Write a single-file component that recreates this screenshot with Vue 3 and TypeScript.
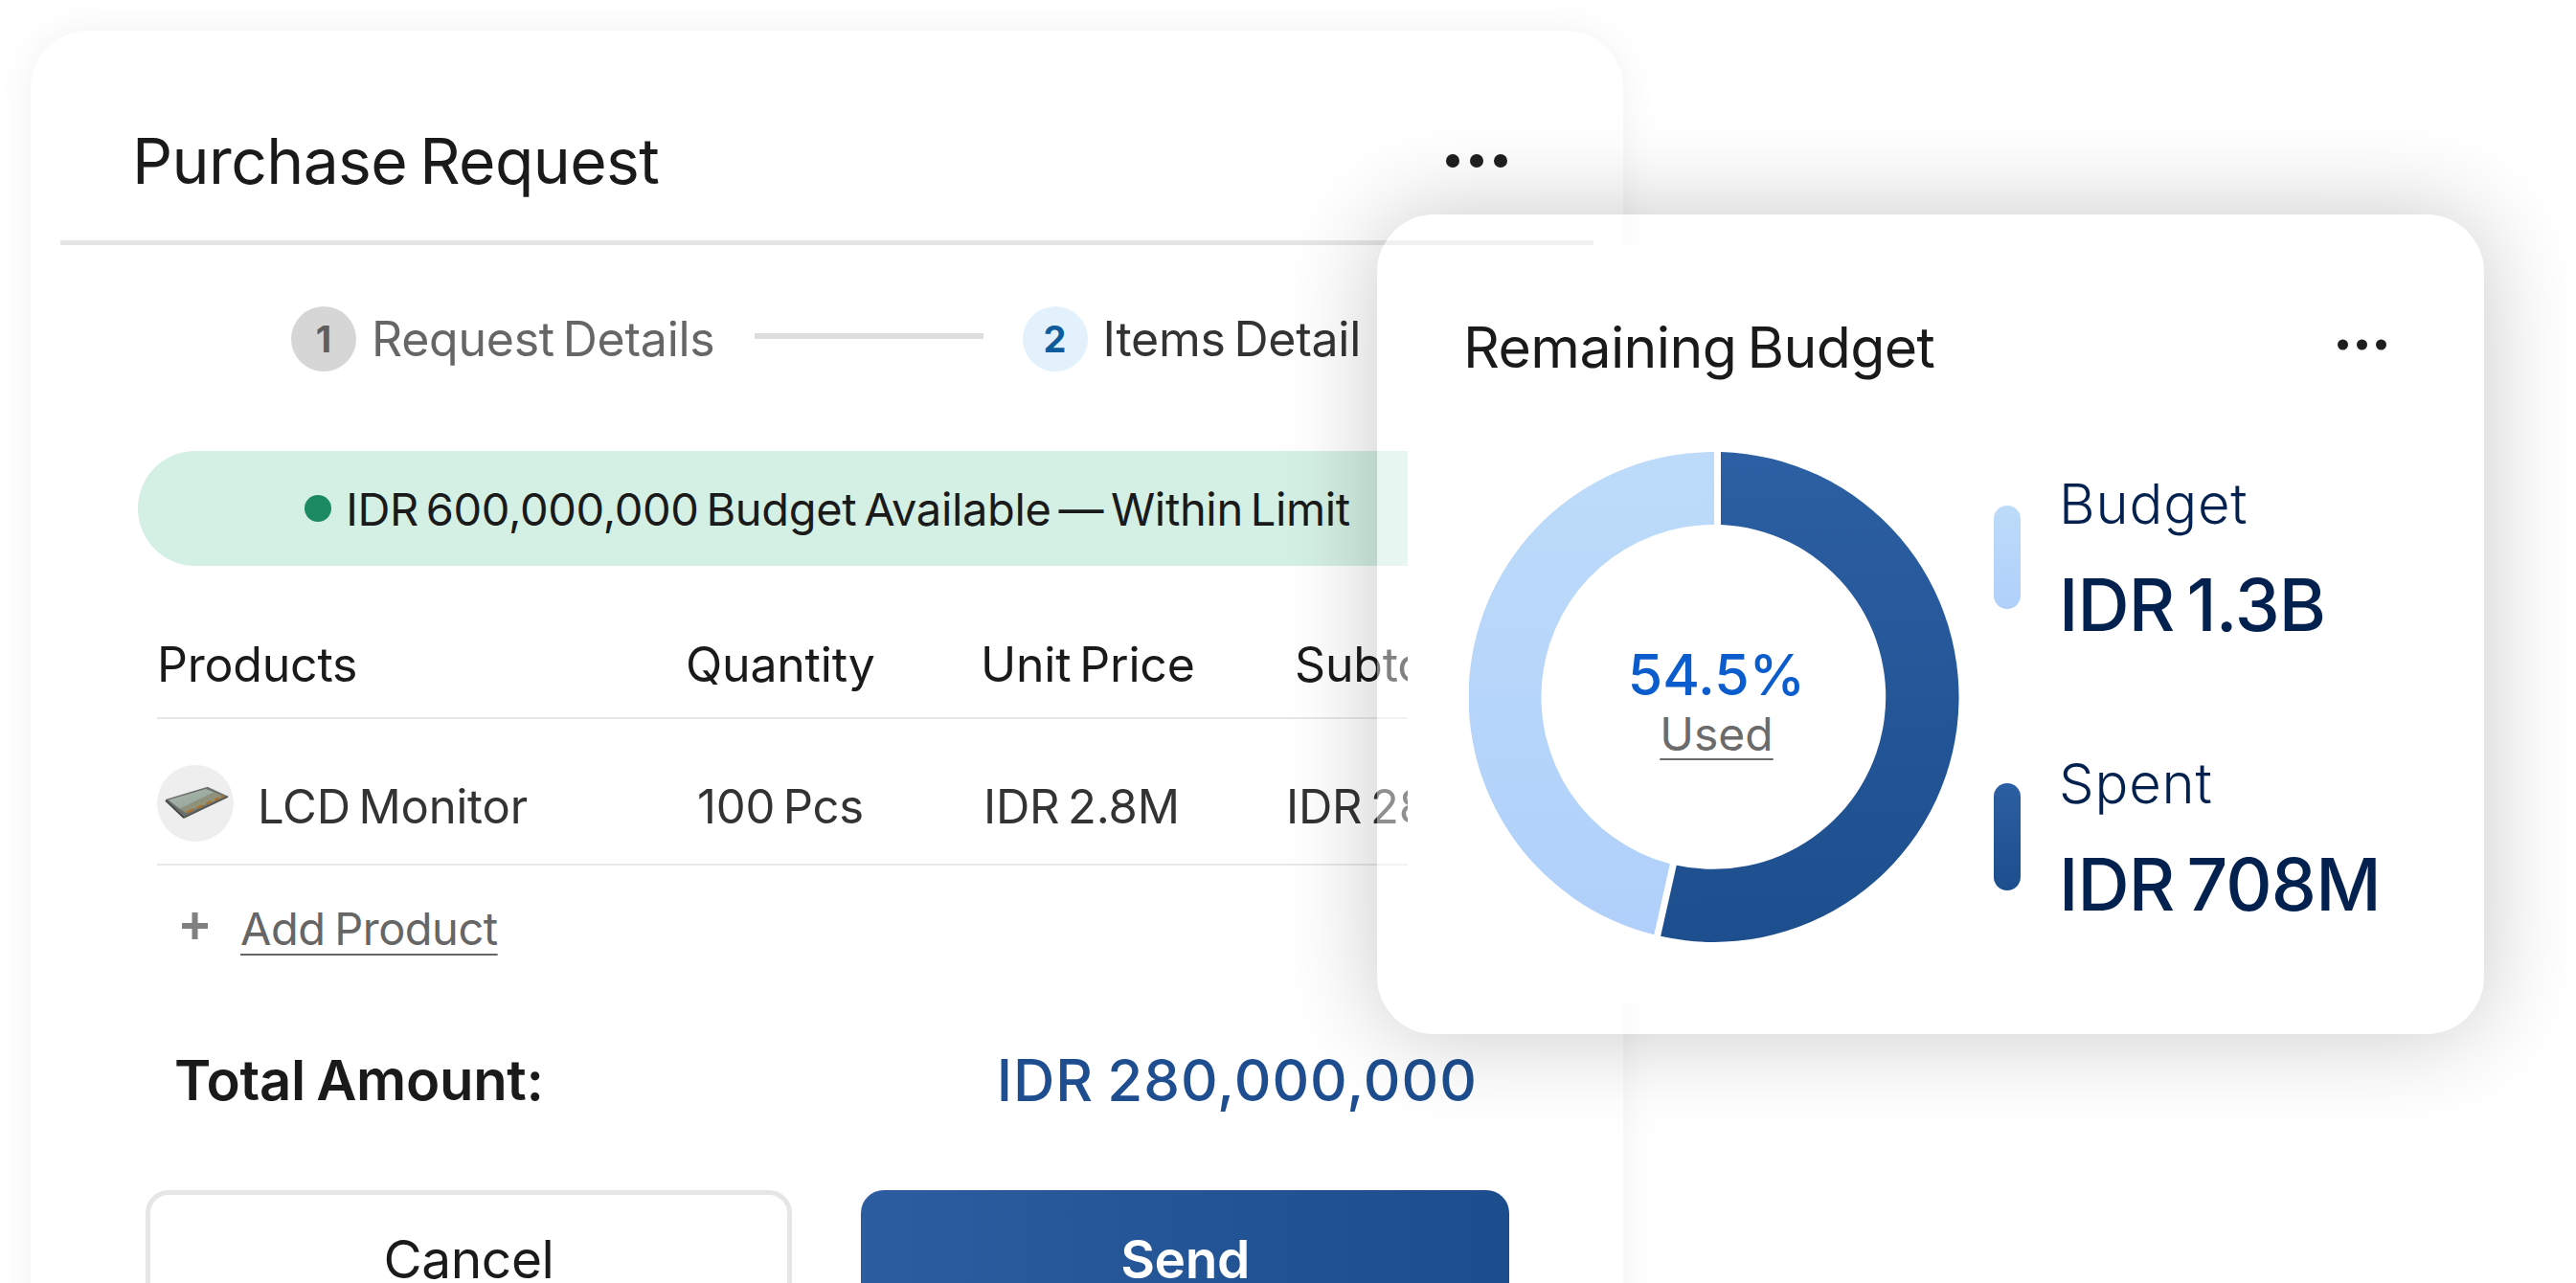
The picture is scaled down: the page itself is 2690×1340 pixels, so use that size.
<script setup lang="ts">
interface Row {
  name: string
  qty: string
  price: string
  subtotal: string
}

const columns = ['Products', 'Quantity', 'Unit Price', 'Subtotal']
const row: Row = { name: 'LCD Monitor', qty: '100 Pcs', price: 'IDR 2.8M', subtotal: 'IDR 280M' }

const legend = [
  { key: 'budget', label: 'Budget', value: 'IDR 1.3B' },
  { key: 'spent', label: 'Spent', value: 'IDR 708M' },
]

// donut geometry, 512 box. the white gap sits on the start side of each arc
const usedAngle = 192.6
const outer = 256
const inner = 180
const gap = 7

function point(r: number, deg: number, shift: number) {
  const a = (deg * Math.PI) / 180
  const x = 256 + r * Math.sin(a) + shift * Math.cos(a)
  const y = 256 - r * Math.cos(a) + shift * Math.sin(a)
  return `${x.toFixed(2)} ${y.toFixed(2)}`
}

function arc(from: number, to: number) {
  const large = to - from > 180 ? 1 : 0
  return [
    `M${point(outer, from, gap)}`,
    `A${outer} ${outer} 0 ${large} 1 ${point(outer, to, 0)}`,
    `L${point(inner, to, 0)}`,
    `A${inner} ${inner} 0 ${large} 0 ${point(inner, from, gap)}`,
    'Z',
  ].join(' ')
}

const usedPath = arc(0, usedAngle)
const restPath = arc(usedAngle, 360)
</script>

<template>
  <div class="stage">
    <section class="pr-card">
      <header class="pr-head">
        <h2 class="pr-title">Purchase Request</h2>
        <svg class="dots" width="64" height="14" viewBox="0 0 64 14" aria-hidden="true">
          <circle cx="7" cy="7" r="7" />
          <circle cx="32" cy="7" r="7" />
          <circle cx="57" cy="7" r="7" />
        </svg>
      </header>
      <div class="pr-divider"></div>

      <div class="steps">
        <span class="step-num step-num--done">1</span>
        <span class="step-label step-label--done">Request Details</span>
        <span class="step-line"></span>
        <span class="step-num step-num--active">2</span>
        <span class="step-label">Items Detail</span>
      </div>

      <div class="banner">
        <span class="banner-dot"></span>
        <span>IDR 600,000,000 Budget Available — Within Limit</span>
      </div>

      <div class="table">
        <div class="table-row table-row--head">
          <span v-for="col in columns" :key="col">{{ col }}</span>
        </div>
        <div class="table-row table-row--body">
          <span class="product">
            <span class="product-thumb">
              <svg width="80" height="80" viewBox="0 0 80 80" aria-hidden="true">
                <defs>
                  <linearGradient id="panel" x1="0" y1="0" x2="1" y2="1">
                    <stop offset="0" stop-color="#aebbb0" />
                    <stop offset="1" stop-color="#8e9c92" />
                  </linearGradient>
                </defs>
                <polygon points="8.700,36 52.700,22.700 74.300,32.700 27.700,55.500" fill="#6c706c" />
                <polygon points="12,36.500 51,25 60,28.500 24,46" fill="url(#panel)" />
                <polygon points="60,28.500 71,33 30,50 24,46" fill="#8f917b" />
                <path d="M31 49.500l7-3M42 44.500l6-2.500M51 40.500l6-2.500M60 36.500l5-2M67 33.500l3-1.200" stroke="#ad7029" stroke-width="2.400" fill="none" />
                <path d="M9 37l19 18" stroke="#444845" stroke-width="1.800" fill="none" />
                <path d="M28 55l46-22" stroke="#515551" stroke-width="1.400" fill="none" />
              </svg>
            </span>
            <span class="product-name">{{ row.name }}</span>
          </span>
          <span class="cell-qty">{{ row.qty }}</span>
          <span>{{ row.price }}</span>
          <span class="cell-sub">{{ row.subtotal }}</span>
        </div>
      </div>

      <div class="add-row">
        <svg class="add-plus" width="27" height="28" viewBox="0 0 27 28" aria-hidden="true">
          <path d="M10.500 0h6v11H27v6H16.500v11h-6V17H0v-6h10.500z" />
        </svg>
        <span class="add-link">Add Product</span>
      </div>

      <div class="total">
        <span class="total-label">Total Amount:</span>
        <span class="total-value">IDR 280,000,000</span>
      </div>

      <div class="actions">
        <button type="button" class="btn btn--ghost">Cancel</button>
        <button type="button" class="btn btn--primary">Send</button>
      </div>
    </section>

    <div class="pr-mask"></div>

    <section class="budget-card">
      <header class="budget-head">
        <h3 class="budget-title">Remaining Budget</h3>
        <svg class="dots" width="51" height="12" viewBox="0 0 51 12" aria-hidden="true">
          <circle cx="5.500" cy="6" r="5.500" />
          <circle cx="25.500" cy="6" r="5.500" />
          <circle cx="45.500" cy="6" r="5.500" />
        </svg>
      </header>

      <div class="budget-body">
        <div class="donut">
          <svg width="512" height="512" viewBox="0 0 512 512" aria-hidden="true">
            <defs>
              <linearGradient id="used" x1="0" y1="0" x2="0" y2="1">
                <stop offset="0" stop-color="#2c5fa3" />
                <stop offset="1" stop-color="#1d4e8d" />
              </linearGradient>
              <linearGradient id="rest" x1="0" y1="0" x2="0" y2="1">
                <stop offset="0" stop-color="#bddbf9" />
                <stop offset="1" stop-color="#b0d0fb" />
              </linearGradient>
            </defs>
            <path :d="usedPath" fill="url(#used)" />
            <path :d="restPath" fill="url(#rest)" />
          </svg>
          <div class="donut-center">
            <span class="donut-pct">54.5%</span>
            <span class="donut-used">Used</span>
          </div>
        </div>

        <ul class="legend">
          <li v-for="item in legend" :key="item.key" class="legend-item">
            <span class="legend-bar" :class="`legend-bar--${item.key}`"></span>
            <div>
              <div class="legend-label">{{ item.label }}</div>
              <div class="legend-value">{{ item.value }}</div>
            </div>
          </li>
        </ul>
      </div>
    </section>
  </div>
</template>

<style scoped>
.stage {
  position: relative;
  width: 2690px;
  height: 1340px;
  overflow: hidden;
  background: #fff;
  font-family: Inter, "Liberation Sans", sans-serif;
  color: #1a1a1a;
}

.pr-card {
  position: absolute;
  left: 32px;
  top: 32px;
  width: 1663px;
  height: 1400px;
  background: #fff;
  border-radius: 60px;
  box-shadow: 0 0 40px rgba(0, 0, 0, 0.06);
}

.pr-head {
  display: flex;
  align-items: center;
  justify-content: space-between;
  padding: 96px 121px 43px 106px;
}

.pr-title {
  margin: 0;
  font-size: 66px;
  line-height: 80px;
  font-weight: 400;
  letter-spacing: -0.6px;
  word-spacing: -5px;
}

.dots {
  fill: #1f1f1f;
}

.pr-divider {
  height: 5px;
  margin: 0 31px;
  background: #e5e5e5;
}

.steps {
  display: flex;
  align-items: center;
  margin: 64px 0 0 272px;
  font-size: 50px;
}

.step-num {
  flex: none;
  width: 68px;
  height: 68px;
  border-radius: 50%;
  display: flex;
  align-items: center;
  justify-content: center;
  font-size: 38px;
  font-weight: 700;
}

.step-num--done {
  background: #d6d6d6;
  color: #5f5f5f;
}

.step-num--active {
  background: #e3f1fc;
  color: #0f5c9c;
}

.step-label {
  margin-left: 16px;
  color: #333;
  white-space: nowrap;
  letter-spacing: -0.25px;
  word-spacing: -5px;
}

.step-label--done {
  color: #666;
}

.step-line {
  width: 239px;
  height: 6px;
  margin: 0 41px 6px 41px;
  background: #ddd;
}

.banner {
  display: flex;
  align-items: center;
  justify-content: center;
  gap: 15px;
  width: 1440px;
  height: 120px;
  margin: 83px 0 0 112px;
  border-radius: 60px;
  background: #d4efe3;
  font-size: 47px;
  letter-spacing: -0.35px;
  word-spacing: -5px;
  white-space: nowrap;
}

.banner-dot {
  width: 28px;
  height: 28px;
  border-radius: 50%;
  background: #1c8a60;
}

.table {
  margin-left: 132px;
  width: 1500px;
  font-size: 50px;
  letter-spacing: -0.2px;
  word-spacing: -5px;
}

.table-row {
  display: grid;
  grid-template-columns: 552px 311px 319px 1fr;
  align-items: center;
  border-bottom: 2px solid #e8e8e8;
  white-space: nowrap;
}

.table-row--head {
  height: 160px;
  padding-top: 48px;
  box-sizing: border-box;
}

.table-row--head span:nth-child(3) {
  margin-left: -3px;
}

.table-row--head span:last-child {
  padding-left: 6px;
}

.table-row--body {
  height: 153px;
  padding-top: 25px;
  box-sizing: border-box;
  color: #333;
  font-size: 49px;
}

.product {
  display: flex;
  align-items: center;
  gap: 25px;
}

.product-name {
  padding-top: 6px;
}

.product-thumb {
  width: 80px;
  height: 80px;
  border-radius: 50%;
  background: #eeeeee;
  display: block;
}

.cell-qty {
  padding-left: 12px;
  padding-top: 6px;
}

.cell-qty + span {
  padding-top: 6px;
}

.cell-sub {
  margin-left: -3px;
  padding-top: 6px;
}

.add-row {
  display: flex;
  align-items: center;
  gap: 34px;
  height: 60px;
  margin: 35px 0 0 158px;
  font-size: 47px;
  color: #666;
  letter-spacing: -0.5px;
  word-spacing: -3px;
}

.add-plus {
  fill: #808080;
  margin-top: -4px;
}

.add-link {
  text-decoration: underline;
  text-decoration-thickness: 2px;
  text-underline-offset: 9px;
}

.total {
  display: flex;
  align-items: center;
  justify-content: space-between;
  width: 1361px;
  height: 60px;
  margin: 99px 0 0 150px;
  font-size: 58px;
  letter-spacing: -0.3px;
  word-spacing: -3px;
  white-space: nowrap;
}

.total-label {
  font-weight: 600;
}

.total-value {
  font-size: 60px;
  font-weight: 500;
  letter-spacing: 1px;
  color: #1e4e8f;
}

.actions {
  display: grid;
  grid-template-columns: 675px 677px;
  gap: 72px;
  margin: 85px 0 0 120px;
}

.btn {
  height: 144px;
  box-sizing: border-box;
  border-radius: 24px;
  font-family: inherit;
  font-size: 55px;
  letter-spacing: -0.4px;
}

.btn--ghost {
  border: 5px solid #e6e6e6;
  background: #fff;
  color: #1a1a1a;
}

.btn--primary {
  border: 0;
  font-weight: 600;
  color: #fff;
  background: linear-gradient(90deg, #2b5da0 0%, #1c4d8c 100%);
}

.pr-mask {
  position: absolute;
  left: 1470px;
  top: 256px;
  width: 250px;
  height: 792px;
  background: #fff;
}

.budget-card {
  position: absolute;
  left: 1438px;
  top: 224px;
  box-sizing: border-box;
  width: 1156px;
  height: 856px;
  padding: 99px 102px 0 90px;
  border-radius: 60px;
  background: rgba(255, 255, 255, 0.45);
  box-shadow: 0 0 100px rgba(0, 0, 0, 0.22);
}

.budget-head {
  display: flex;
  align-items: center;
  justify-content: space-between;
}

.budget-head .dots {
  margin-top: -6px;
}

.budget-title {
  margin: 0;
  font-size: 59px;
  line-height: 80px;
  font-weight: 400;
  letter-spacing: -0.6px;
  word-spacing: -5px;
}

.budget-body {
  display: flex;
  margin: 69px 0 0 6px;
}

.donut {
  position: relative;
  width: 512px;
  height: 512px;
  flex: none;
}

.donut-center {
  position: absolute;
  inset: 0;
  padding: 8px 0 0 5px;
  box-sizing: border-box;
  display: flex;
  flex-direction: column;
  align-items: center;
  justify-content: center;
}

.donut-pct {
  font-size: 59px;
  line-height: 70px;
  font-weight: 500;
  color: #0b5ccc;
}

.donut-used {
  font-size: 48px;
  line-height: 54px;
  color: #6b6b6b;
  text-decoration: underline;
  text-decoration-thickness: 2px;
  text-underline-offset: 8px;
}

.legend {
  list-style: none;
  margin: 26px 0 0 36px;
  padding: 0;
  display: flex;
  flex-direction: column;
  gap: 114px;
  color: #03214f;
}

.legend-item {
  display: flex;
  align-items: center;
  gap: 40px;
  white-space: nowrap;
}

.legend-bar {
  flex: none;
  width: 28px;
  border-radius: 14px;
  margin-bottom: 10px;
}

.legend-bar--budget {
  height: 108px;
  background: linear-gradient(180deg, #bddbf9, #b0d0fb);
}

.legend-bar--spent {
  height: 112px;
  background: linear-gradient(180deg, #2c5fa3, #1d4e8d);
}

.legend-label {
  font-size: 58px;
  line-height: 60px;
  font-weight: 300;
  letter-spacing: 0.8px;
  position: relative;
  top: -2px;
}

.legend-value {
  margin-top: 30px;
  font-size: 75px;
  line-height: 88px;
  font-weight: 500;
  letter-spacing: -0.9px;
  word-spacing: -6px;
}
</style>

<style>
html,
body {
  margin: 0;
  background: #fff;
}
</style>
